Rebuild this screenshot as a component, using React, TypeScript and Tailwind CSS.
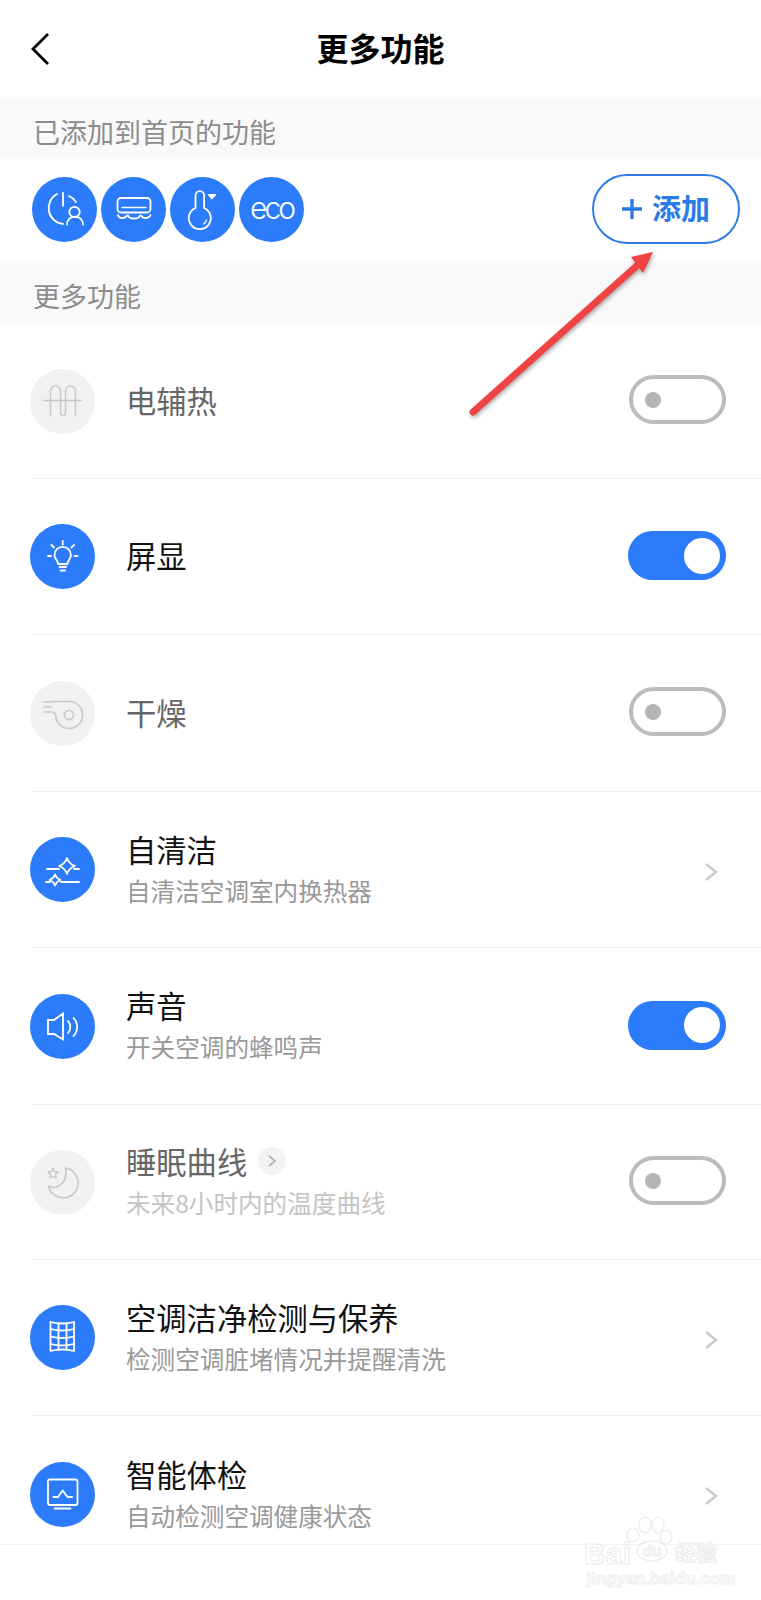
import type { ReactNode } from "react";

const FONT = "font-['Noto_Sans_CJK_SC','Noto_Sans',sans-serif]";

// 图标都画在 65x65 的圆里
function Circle({ on = true, children }: { on?: boolean; children: ReactNode }) {
  return (
    <div
      className={`h-[65px] w-[65px] shrink-0 rounded-full ${on ? "bg-[#2b7bfa] text-white" : "bg-[#f1f1f1] text-[#c9c9c9]"}`}
    >
      <svg viewBox="0 0 65 65" className="h-full w-full" fill="none" stroke="currentColor" strokeWidth="1.8" strokeLinecap="round" strokeLinejoin="round">
        {children}
      </svg>
    </div>
  );
}

const star = (cx: number, cy: number, r: number) =>
  `M${cx} ${cy - r} Q${cx + r * 0.25} ${cy - r * 0.25} ${cx + r} ${cy} Q${cx + r * 0.25} ${cy + r * 0.25} ${cx} ${cy + r} Q${cx - r * 0.25} ${cy + r * 0.25} ${cx - r} ${cy} Q${cx - r * 0.25} ${cy - r * 0.25} ${cx} ${cy - r}Z`;

const icons = {
  timer: (
    <>
      <path d="M25 17 A16 16 0 0 0 31 47" />
      <path d="M31 16 V29" />
      <path d="M37 19 A16 16 0 0 1 44 25" />
      <circle cx="42.5" cy="35" r="5.2" />
      <path d="M35 47.5 C35 37 51 37 51 47.5" />
    </>
  ),
  ac: (
    <>
      <rect x="16.5" y="21" width="33" height="14.5" rx="3.5" />
      <path d="M21 30.5 H45" strokeWidth="1.4" />
      <path d="M17 38 C18 42 24 42 26 38.5" />
      <path d="M27 38.5 C28 42.5 38 42.5 39 38.5" />
      <path d="M40 38.5 C42 42 48 42 49.5 38" />
    </>
  ),
  thermo: (
    <>
      <path d="M25.5 31 V18.5 a4.3 4.3 0 0 1 8.6 0 V31 a11 11 0 1 1 -8.6 0Z" />
      <path d="M36.5 43 a7 7 0 0 1 -3 4" strokeWidth="1.3" />
      <path d="M38.5 17.5 H46 L42 22Z" fill="currentColor" stroke="none" />
      <path d="M38.5 17.5 H46 L42 22Z" strokeWidth="1" />
    </>
  ),
  eco: (
    <text x="32.5" y="41.5" textAnchor="middle" fontSize="30" letterSpacing="-3" fontFamily="Inter, sans-serif" fontWeight="300" fill="currentColor" stroke="none">
      eco
    </text>
  ),
  heater: (
    <>
      <path d="M14 31.5 H51" strokeWidth="1.5" />
      <path d="M20.5 47 V22 a5 5 0 0 1 10 0 V44 a2.5 2.5 0 0 0 5 0 V22 a5 5 0 0 1 10 0 V47" strokeWidth="1.5" />
    </>
  ),
  bulb: (
    <>
      <path d="M28 40 C28 36 24.5 35.5 24.5 31 a8.2 8.2 0 0 1 16.4 0 C40.9 35.5 37.5 36 37.5 40 Z" />
      <path d="M29.5 43 H36 M30.5 46.5 H35" />
      <path d="M32.7 17 V20.5 M21.5 21 L24 23.5 M44 21 L41.5 23.5 M18 32 H21 M44.5 32 H47.5" />
    </>
  ),
  dryer: (
    <>
      <path d="M14 21 H21 M14 26 H21 M14 31 H21" strokeWidth="1.6" />
      <path d="M21 20.5 H39 A13.5 13.5 0 1 1 26 37 C26 32.5 25 32 23 31" strokeWidth="1.6" />
      <circle cx="39" cy="34" r="4.6" strokeWidth="1.6" />
    </>
  ),
  sparkle: (
    <>
      <path d={star(37, 29, 8)} />
      <path d="M17 32 H29 M44 32 H49" />
      <path d={star(25, 43, 5.5)} />
      <path d="M16 45 H20 M31 45 H49" />
    </>
  ),
  sound: (
    <>
      <path d="M18 26 H24 L33 19.5 V45.5 L24 40 H18 Z" strokeLinejoin="miter" />
      <path d="M38 27 a9 9 0 0 1 0 12" />
      <path d="M43.5 24 a13 13 0 0 1 0 18" />
    </>
  ),
  moon: (
    <>
      <path d="M35.5 18 A15 15 0 1 1 18.5 36 C26 40 38 35 35.5 18 Z" strokeWidth="1.6" />
      <path d="M23 18 L24.5 21.5 L28 22 L25.5 24.5 L26 28 L23 26.3 L20 28 L20.5 24.5 L18 22 L21.5 21.5 Z" strokeWidth="1.3" />
    </>
  ),
  grid: (
    <>
      <path d="M20.5 17 Q32.5 20 44 17 V46 Q32.5 43 20.5 46 Z" />
      <path d="M28.5 18.5 V44.5 M36.5 18.5 V44.5" />
      <path d="M20.5 24 Q32.5 27 44 24 M20.5 31.5 Q32.5 34.5 44 31.5 M20.5 39 Q32.5 42 44 39" />
    </>
  ),
  monitor: (
    <>
      <rect x="18" y="17.5" width="29.5" height="25.5" rx="2" />
      <path d="M23.5 35 H28 L32.7 28.5 L37.5 35 H42" />
      <path d="M24.5 46.5 H40.5" />
    </>
  ),
};

function Toggle({ on }: { on: boolean }) {
  if (on) {
    return (
      <div className="mb-[2px] flex h-[49px] w-[98px] shrink-0 items-center justify-end rounded-full bg-[#2b7bfa] pr-[6px]">
        <div className="h-[36px] w-[36px] rounded-full bg-white" />
      </div>
    );
  }
  return (
    <div className="mb-[3px] flex h-[49px] w-[97px] shrink-0 items-center rounded-full border-[4px] border-[#bcbcbc] bg-white pl-[12px]">
      <div className="h-[16px] w-[16px] rounded-full bg-[#b5b5b5]" />
    </div>
  );
}

function Chevron({ className }: { className: string }) {
  return (
    <svg width="14" height="20" viewBox="0 0 14 20" className={`mr-[8px] shrink-0 ${className}`} fill="none" stroke="#cccccc" strokeWidth="2.6">
      <path d="M2 2 L12 10 L2 18" />
    </svg>
  );
}

type Row = {
  height: string;
  icon: ReactNode;
  on: boolean;
  title: string;
  sub?: string;
  link?: boolean;
  right: "on" | "off" | "more";
};

const rows: Row[] = [
  { height: "h-[155px]", icon: icons.heater, on: false, title: "电辅热", right: "off" },
  { height: "h-[156px]", icon: icons.bulb, on: true, title: "屏显", right: "on" },
  { height: "h-[157px]", icon: icons.dryer, on: false, title: "干燥", right: "off" },
  { height: "h-[156px]", icon: icons.sparkle, on: true, title: "自清洁", sub: "自清洁空调室内换热器", right: "more" },
  { height: "h-[157px]", icon: icons.sound, on: true, title: "声音", sub: "开关空调的蜂鸣声", right: "on" },
  { height: "h-[155px]", icon: icons.moon, on: false, title: "睡眠曲线", sub: "未来8小时内的温度曲线", link: true, right: "off" },
  { height: "h-[156px]", icon: icons.grid, on: true, title: "空调洁净检测与保养", sub: "检测空调脏堵情况并提醒清洗", right: "more" },
];

function FeatureRow({ row }: { row: Row }) {
  return (
    <div className={`ml-[32px] flex ${row.height} items-center border-b border-[#eeeeee] pr-[35px]`}>
      <div className="-ml-[2px]">
        <Circle on={row.on}>{row.icon}</Circle>
      </div>
      <div className="ml-[31px] min-w-0 flex-1 pb-[3px]">
        <div className="flex items-center">
          <span className={`text-[30.3px] leading-[44px] ${row.on ? "text-[#111111]" : "text-[#666666]"}`}>{row.title}</span>
          {row.link && (
            <span className="ml-[11px] flex h-[28px] w-[28px] items-center justify-center rounded-full bg-[#f3f3f3]">
              <svg width="10" height="14" viewBox="0 0 10 14" fill="none" stroke="#b5b5b5" strokeWidth="1.8">
                <path d="M2 2 L8 7 L2 12" />
              </svg>
            </span>
          )}
        </div>
        {row.sub && (
          <div className={`text-[24.6px] leading-[39px] ${row.on ? "text-[#999999]" : "text-[#c4c4c4]"}`}>{row.sub}</div>
        )}
      </div>
      {row.right === "more" ? <Chevron className="mt-[5px]" /> : <Toggle on={row.right === "on"} />}
    </div>
  );
}

function Band({ label, height }: { label: string; height: string }) {
  return (
    <div className={`flex ${height} items-center bg-[#f9f9f9] pl-[33px] pt-[8px] text-[27px] text-[#8c8c8c]`}>
      {label}
    </div>
  );
}

export default function App() {
  return (
    <div className={`relative h-[1600px] w-[761px] overflow-hidden bg-white ${FONT}`}>
      {/* 顶栏 */}
      <header className="grid h-[97px] grid-cols-[1fr_auto_1fr] items-center">
        <svg width="20" height="34" viewBox="0 0 20 34" className="ml-[30px]" fill="none" stroke="#000000" strokeWidth="2.8">
          <path d="M18 2 L3 17 L18 32" />
        </svg>
        <h1 className="pb-[3px] text-[32px] font-bold text-black">更多功能</h1>
        <div />
      </header>

      <Band label="已添加到首页的功能" height="h-[62px]" />
      <div className="flex h-[102px] items-center justify-between pb-[2px] pl-[32px] pr-[21px]">
        <div className="flex gap-[4px]">
          <Circle>{icons.timer}</Circle>
          <Circle>{icons.ac}</Circle>
          <Circle>{icons.thermo}</Circle>
          <Circle>{icons.eco}</Circle>
        </div>
        <button className="flex h-[70px] w-[148px] items-center justify-center gap-[10px] rounded-full border-2 border-[#2f7be6] text-[#2b7be6]">
          <svg width="20" height="20" viewBox="0 0 20 20" stroke="currentColor" strokeWidth="3.4">
            <path d="M10 0 V20 M0 10 H20" />
          </svg>
          <span className="pb-[2px] text-[29px] font-bold">添加</span>
        </button>
      </div>
      <Band label="更多功能" height="h-[63px]" />

      {/* 功能列表 */}
      <div>
        {rows.map((row) => (
          <FeatureRow key={row.title} row={row} />
        ))}
        <div className="flex h-[129px] items-center border-b border-[#f3f3f3] pl-[30px] pr-[35px] pt-[29px]">
          <Circle>{icons.monitor}</Circle>
          <div className="ml-[31px] flex-1 pb-[3px]">
            <div className="text-[30.3px] leading-[44px] text-[#111111]">智能体检</div>
            <div className="text-[24.6px] leading-[39px] text-[#999999]">自动检测空调健康状态</div>
          </div>
          <Chevron className="mt-[2px]" />
        </div>
      </div>

      {/* 红色箭头标注 */}
      <svg className="absolute left-0 top-0 drop-shadow-[1px_2px_2px_rgba(0,0,0,0.35)]" width="761" height="440" fill="none">
        <path d="M473 412 L641 262" stroke="#f04444" strokeWidth="7" strokeLinecap="round" />
        <path d="M653 252 L631 257 L643 273 Z" fill="#f04444" />
      </svg>

      {/* 水印 */}
      <div className="absolute left-[583px] top-[1509px] w-[140px] font-['Liberation_Sans',sans-serif] text-white">
        <svg width="140" height="60" viewBox="0 0 140 60" className="absolute left-0 top-0" fill="#ffffff" stroke="#ebebeb" strokeWidth="1.2">
          <ellipse cx="50" cy="26" rx="6" ry="7" />
          <ellipse cx="62" cy="16" rx="6" ry="8" />
          <ellipse cx="75" cy="16" rx="6" ry="8" />
          <ellipse cx="83" cy="28" rx="6" ry="7" />
          <ellipse cx="69" cy="42" rx="15" ry="10" />
        </svg>
        <div className="relative flex h-[60px] items-end justify-between text-[29px] font-bold leading-[30px] [-webkit-text-stroke:1px_#ebebeb]">
          <span className="ml-[1px] tracking-[1px]">Bai</span>
          <span className="absolute left-[60px] top-[33px] text-[15px] leading-[18px]">du</span>
          <span className={`mb-[3px] mr-[6px] text-[21px] ${FONT}`}>经验</span>
        </div>
        <div className="relative ml-[3px] whitespace-nowrap text-[17px] font-bold leading-[20px] [-webkit-text-stroke:1px_#eeeeee]">jingyan.baidu.com</div>
      </div>
    </div>
  );
}
